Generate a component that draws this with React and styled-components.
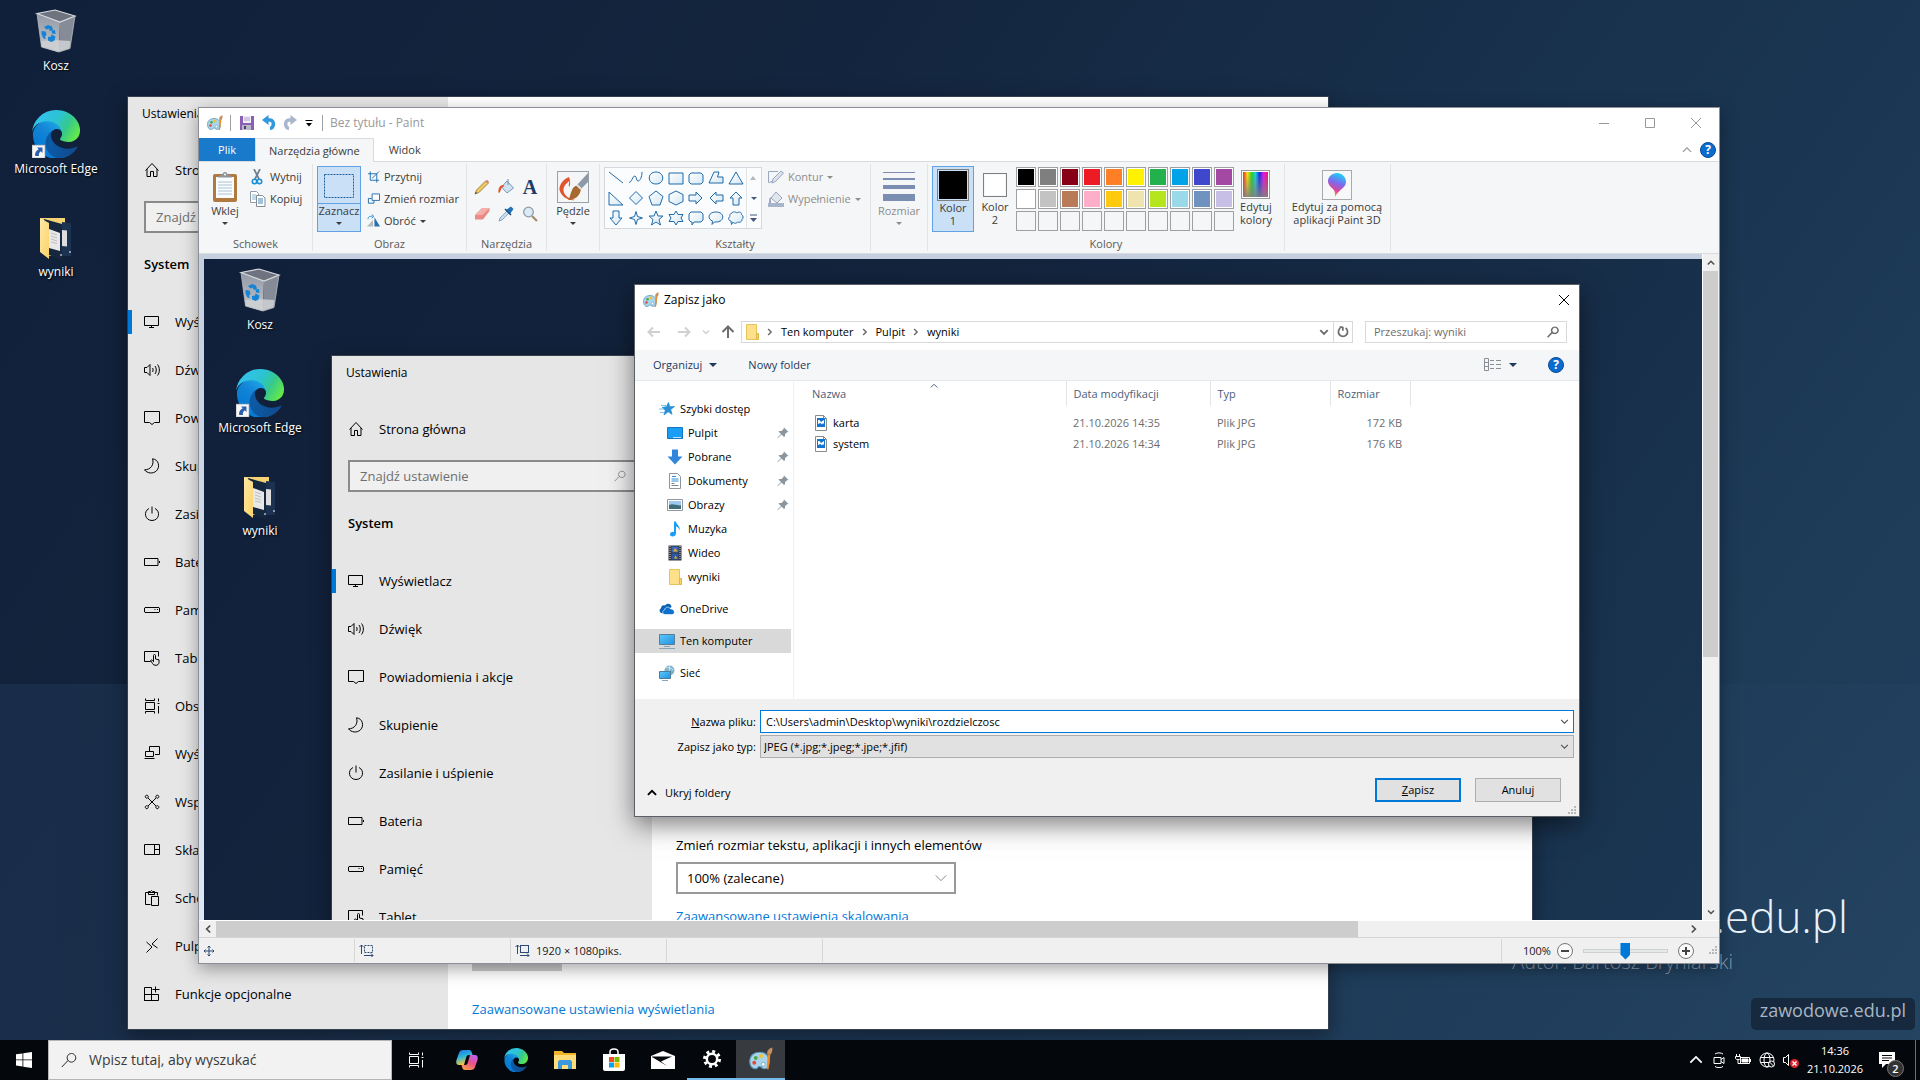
import React, { useId } from 'react'
import styled, { createGlobalStyle, css } from 'styled-components'

const GlobalStyle = createGlobalStyle`
  * {
    box-sizing: border-box;
  }
  body {
    margin: 0;
    overflow: hidden;
    font-family: 'Open Sans', 'Noto Sans', sans-serif;
    font-size: 11px;
    line-height: 16px;
    color: #000;
  }
  button, input, select {
    margin: 0;
    padding: 0;
    border: 0;
    border-radius: 0;
    background: none;
    font: inherit;
    color: inherit;
    outline: none;
  }
  svg {
    display: block;
    flex: none;
  }
  a {
    text-decoration: none;
  }
`

/* ---------- icons ---------- */

const Defs = styled.svg`
  position: absolute;
`

const Gradients = () => (
  <Defs width="0" height="0" aria-hidden="true">
    <linearGradient id="edgeDark" x1="0.2" y1="0.5" x2="1" y2="0.6">
      <stop offset="0" stopColor="#0c59a4" />
      <stop offset="1" stopColor="#114a8b" />
    </linearGradient>
    <linearGradient id="edgeBlue" x1="0.8" y1="0.2" x2="0.3" y2="1">
      <stop offset="0" stopColor="#1b9de2" />
      <stop offset="0.3" stopColor="#1384d6" />
      <stop offset="1" stopColor="#0078d4" />
    </linearGradient>
    <linearGradient id="edgeGreen" x1="0" y1="0.3" x2="1" y2="0.7">
      <stop offset="0" stopColor="#35c1f1" />
      <stop offset="0.45" stopColor="#2bc3d2" />
      <stop offset="0.7" stopColor="#36c98c" />
      <stop offset="1" stopColor="#66eb46" />
    </linearGradient>
    <linearGradient id="binSide" x1="0" y1="0" x2="0" y2="1">
      <stop offset="0" stopColor="#9299a4" />
      <stop offset="1" stopColor="#c3c6cb" />
    </linearGradient>
    <linearGradient id="folderFront" x1="0" y1="0" x2="1" y2="1">
      <stop offset="0" stopColor="#ffe9a6" />
      <stop offset="1" stopColor="#fbd267" />
    </linearGradient>
    <linearGradient id="shapeFill" x1="0" y1="0" x2="1" y2="1">
      <stop offset="0" stopColor="#ffffff" />
      <stop offset="1" stopColor="#d5e8f3" />
    </linearGradient>
    <linearGradient id="screen" x1="0" y1="0" x2="1" y2="1">
      <stop offset="0" stopColor="#5ec8fb" />
      <stop offset="1" stopColor="#1f92e0" />
    </linearGradient>
    <linearGradient id="rainbow">
      <stop offset="0" stopColor="#ff2020" />
      <stop offset="0.18" stopColor="#ffe600" />
      <stop offset="0.35" stopColor="#23d423" />
      <stop offset="0.5" stopColor="#10d5e8" />
      <stop offset="0.66" stopColor="#1a22f0" />
      <stop offset="0.83" stopColor="#ee10ee" />
      <stop offset="1" stopColor="#f01848" />
    </linearGradient>
    <linearGradient id="fadeGray" x1="0" y1="0" x2="0" y2="1">
      <stop offset="0" stopColor="#808080" stopOpacity="0" />
      <stop offset="1" stopColor="#808080" stopOpacity="0.9" />
    </linearGradient>
    <linearGradient id="pinDrop" x1="0.6" y1="0" x2="0.3" y2="1">
      <stop offset="0" stopColor="#19d3f5" />
      <stop offset="0.4" stopColor="#7a6cf0" />
      <stop offset="0.7" stopColor="#d8479b" />
      <stop offset="1" stopColor="#f7b32b" />
    </linearGradient>
    <linearGradient id="copilotA" x1="0" y1="0" x2="0.3" y2="1">
      <stop offset="0" stopColor="#1d6fe8" />
      <stop offset="0.5" stopColor="#2bb6d9" />
      <stop offset="1" stopColor="#f5c63a" />
    </linearGradient>
    <linearGradient id="copilotB" x1="0.8" y1="0" x2="0.3" y2="1">
      <stop offset="0" stopColor="#b665f2" />
      <stop offset="0.5" stopColor="#ee4f8c" />
      <stop offset="1" stopColor="#fa9a4b" />
    </linearGradient>
  </Defs>
)

const EdgeIcon = ({ size = 48, shortcut }) => (
  <svg width={size} height={size} viewBox="0 0 256 256">
    <path fill="url(#edgeDark)" d="M235.7 195.5a93.7 93.7 0 0 1-10.6 4.7 101.9 101.9 0 0 1-35.9 6.4c-47.3 0-88.5-32.5-88.5-74.3a31.5 31.5 0 0 1 16.4-27.3c-42.8 1.8-53.8 46.4-53.8 72.5 0 74 68.1 81.4 82.8 81.4 7.9 0 19.8-2.3 27-4.6l1.3-.4a128.3 128.3 0 0 0 66.6-52.8 4 4 0 0 0-5.3-5.6Z" />
    <path fill="url(#edgeBlue)" d="M110.3 246.3A79.2 79.2 0 0 1 87.6 225a80.7 80.7 0 0 1 29.5-120c3.2-1.5 8.5-4.1 15.6-4a32.4 32.4 0 0 1 25.7 13 31.9 31.9 0 0 1 6.3 18.7c0-.2 24.5-79.6-80-79.6-43.9 0-80 41.6-80 78.2a130.2 130.2 0 0 0 12.1 56 128 128 0 0 0 156.4 67 75.5 75.5 0 0 1-62.8-8Z" />
    <path fill="url(#edgeGreen)" d="M152.5 148.9c-.9 1-3.4 2.5-3.4 5.6 0 2.6 1.7 5.2 4.8 7.3 14.3 10 41.4 8.6 41.5 8.6a59.6 59.6 0 0 0 30.3-8.3 61.4 61.4 0 0 0 30.4-52.9c.3-22.4-8-37.3-11.3-43.9C223.5 23.9 177.7 0 128 0A128 128 0 0 0 0 126.2c.5-36.5 36.8-66 80-66 3.5 0 23.5.3 42 10 16.3 8.6 24.9 18.9 30.8 29.2 6.2 10.7 7.3 24.1 7.3 29.5 0 5.3-2.7 13.3-7.6 20Z" />
    {shortcut && (
      <g transform="translate(0 187) scale(5.33)">
        <rect width="13" height="13" fill="#f6f7f8" stroke="#9aa1a8" strokeWidth="0.6" />
        <path d="M5 2.5h5.5V8L8.800 6.300C7.200 7.400 6.600 8.800 7 11H3.200C2.600 8 4 5.600 6.700 4.200z" fill="#2d5fae" />
      </g>
    )}
  </svg>
)

const BinIcon = () => (
  <svg width="48" height="48" viewBox="0 0 48 48">
    <path d="M5 6.500 28 15 27 45 9.500 40z" fill="url(#binSide)" />
    <path d="M28 15 43 9 38 41.500 27 45z" fill="#858c97" />
    <path d="M9 34 22 33l16.500 1-1 7.500L26 45 9.500 40z" fill="#cfd1d3" opacity="0.85" />
    <path d="M5 6.500 23 3l20 6-15 6z" fill="#6d7480" stroke="#dadcde" strokeWidth="1.200" />
    <path d="M5 6.500 9.500 40 27 45 38 41.500 43 9" fill="none" stroke="#b7bcc2" strokeWidth="0.800" />
    <g fill="#1583d8">
      <path d="M12 20l4-2 4 1.500 1 3.500-3 1-1.500-2.500-2 1z" />
      <path d="M9.500 24l4 .5 1 3-1.500 2.500 1 2-2.500-.5-2-4z" />
      <path d="M16 30l3-.5.5-2 4 2-1 4-3 1.500-3.500-1.500z" />
      <path d="M19.500 23.500l3.500-.5.500 4-3.500-.500z" />
    </g>
  </svg>
)

const WynikiIcon = () => (
  <svg width="48" height="48" viewBox="0 0 48 48">
    <path d="M8 5h25v38H17z" fill="#f5d272" />
    <path d="M12 6l18 5v36l-13-5z" fill="#16283f" />
    <path d="M30 9l9 1v33l-9 0z" fill="#1b3350" />
    <path d="M17 16l11 4v18l-11-3z" fill="#e8e8e8" />
    <path d="M30 17l5 .5v16l-5-.500z" fill="#dedede" />
    <path d="M19 20l6 2M19 23l6 2M19 26l6 2M19 29l6 1.500" stroke="#b5b5b5" strokeWidth="0.800" />
    <path d="M38 38v2M29 41v2" stroke="#fff" />
    <path d="M8 5l9 5v36l-9-7z" fill="url(#folderFront)" />
  </svg>
)

const PaletteIcon = ({ size = 16 }) => (
  <svg width={size} height={size} viewBox="0 0 16 16">
    <path d="M7 3.500C3 3.500.5 6 .5 9.500S2.500 14.500 4.500 14.500c1.500 0 1-1.500 2.500-1.500s1.500 1.500 3.500 1.500C12.500 14.500 13.500 12 13.500 9.500 13.500 6 11 3.500 7 3.500z" fill="#a9d4ea" stroke="#5c98bd" strokeWidth="0.800" />
    <circle cx="3.500" cy="10.500" r="1.300" fill="#e24a3b" />
    <circle cx="4.500" cy="7.300" r="1.300" fill="#4aa84a" />
    <circle cx="8" cy="6" r="1.400" fill="#f2c22e" />
    <circle cx="9.500" cy="11.500" r="1.300" fill="#fff" stroke="#5c98bd" strokeWidth="0.500" />
    <path d="M12.500 5h1.800L13 15l-1.200-.3z" fill="#f08a24" />
    <path d="M12.300 5C11.500 3 13 1 15.500.3c.3 2-.2 3.700-1.200 4.700z" fill="#c98f5e" />
  </svg>
)

const iconPaths = {
  home: 'M1.500 8.500 8 1.500l6.500 7M3 7v7.500h3.500V9.500h3v5H13V7',
  display: 'M.5 2.500h14v9H.5zM5 13.500h5M7.500 11.500v2',
  sound: 'M.5 5.500h2.500l3-3v11l-3-3H.5zM8.500 6c.8 1 .8 3 0 4M11 4c1.700 2 1.700 6 0 8M13.500 2.500c2.500 3 2.500 8 0 11',
  bell: 'M.5 1.500h15v11h-5l-2.500 2-2.500-2h-5z',
  moon: 'M8.500.8c6 .5 8 8 4 12-3.500 3.500-9.500 2.500-12-1C6.500 12 10.500 6.500 8.500.8z',
  power: 'M8 .5v7M5 2.500c-6 3-4 12 3 12s9-9 3-12',
  battery: 'M.5 4.500h13.500v7H.5zM15.500 7v2',
  storage: 'M1 5.500h14l.5.500v4l-.5.500H1l-.5-.5v-4zM10.500 7.500h1M13 7.500h1',
  tablet: 'M6.500 11.500h-6v-10h14v5M9.500 12V5.500c0-1.300 2-1.300 2 0V9l3.500.8v2.700c0 3.500-5.500 3.500-6.500 1L6.500 10.500c.5-1 2-.5 3 1',
  multi: 'M1.500.5v2h9v-2M1.500 4.500h9v7h-9zM1.500 15.500v-2h9v2M14.500.5v3M14.500 8v7.500M13.500 5.500h2',
  project: 'M5.500 5V.5h10v8h-4.500M1.500 5.500h8v5h-8zM.5 12.500h10',
  share: 'M4 4l8 8M12 4l-8 8M2.700 1.200a1.500 1.500 0 1 0 .1 0M13.300 1.200a1.500 1.500 0 1 0 .1 0M2.700 11.700a1.500 1.500 0 1 0 .1 0M13.300 11.700a1.500 1.500 0 1 0 .1 0',
  parts: 'M.5 2.500h15v10H.5zM10.500 2.500v10M10.500 7.500h5',
  clipboard: 'M6.500 14.500h-5v-12h12v3M4.500 3V1.500h2l1-1 1 1h2v3h-6zM7.500 6.500h7v9h-7z',
  remote: 'M13.500.5 8 6l5.500 4M2.500 4 8 9l-5.500 5.500',
  optional: 'M.5 1.500h7v13h-7zM.5 8.500h14v6h-14zM11.500.5v6M8.500 3.500h7',
  search: 'M10.500 1.500a4.300 4.300 0 1 1-.1 0M7 8.500.8 15',
  chevronUp: 'M1.500 11 8 4.500l6.500 6.500',
  chevronDown: 'M2 5l6 6 6-6',
  chevronRight: 'M5.500 4l4 4-4 4',
  chevronLeft: 'M10.500 4l-4 4 4 4',
  close: 'M3 3l10 10M13 3 3 13',
  maximize: 'M3.500 3.500h9v9h-9z',
  minimize: 'M3 8.500h10',
  back: 'M14 8H2.500M7 3.500 2.500 8 7 12.500',
  forward: 'M2 8h11.500M9 3.500l4.500 4.500L9 12.500',
  up: 'M8 14V2.500M2.500 8 8 2.500 13.500 8',
  refresh: 'M5 3.500a5.200 5.200 0 1 0 6 0M7.500 2.500h-3.500M7.800 2v4.500'
}

const LineIcon = ({ name, size = 16, weight = 1 }) => (
  <svg width={size} height={size} viewBox="0 0 16 16" fill="none" stroke="currentColor" strokeWidth={weight}>
    <path d={iconPaths[name]} />
  </svg>
)

const Caret = styled.span`
  width: 0;
  height: 0;
  flex: none;
  border: solid transparent;
  border-width: ${({ $big }) => ($big ? '4px 4px 0' : '3px 3px 0')};
  border-top-color: currentColor;
`

/* ---------- desktop ---------- */

const Wallpaper = styled.div`
  position: relative;
  overflow: hidden;
  width: ${({ $picture }) => ($picture ? '1920px' : '100%')};
  height: ${({ $picture }) => ($picture ? '1080px' : '100vh')};
  background:
    linear-gradient(90deg, rgba(80, 130, 180, 0.11), rgba(80, 130, 180, 0.03)) 0 684px no-repeat,
    linear-gradient(125deg, #11203a 0%, #13243d 30%, #19334f 65%, #22425f 100%);
`

const IconColumn = styled.div`
  display: flex;
  flex-direction: column;
  width: 112px;
`

const DesktopIcon = styled.button`
  display: flex;
  flex-direction: column;
  align-items: center;
  gap: 3px;
  height: 103px;
  padding-top: 7px;
  color: #fff;
  font-size: 12px;
  text-shadow: 1px 1px 2px #000;
  white-space: nowrap;
`

const Shortcuts = () => (
  <IconColumn>
    <DesktopIcon><BinIcon />Kosz</DesktopIcon>
    <DesktopIcon><EdgeIcon shortcut />Microsoft Edge</DesktopIcon>
    <DesktopIcon><WynikiIcon />wyniki</DesktopIcon>
  </IconColumn>
)

const Branding = styled.div`
  position: absolute;
  right: 72px;
  bottom: 104px;
  display: flex;
  flex-direction: column;
  align-items: flex-end;
  font-weight: 300;
`

const BrandTitle = styled.div`
  font-size: 44px;
  line-height: 64px;
  color: #eaf2fa;
`

const BrandAuthor = styled.div`
  margin-right: 115px;
  font-size: 20px;
  line-height: 28px;
  color: #8799ac;
`

const BrandBadge = styled.div`
  position: absolute;
  right: 5px;
  bottom: 50px;
  height: 32px;
  padding: 0 9px;
  border-radius: 5px;
  background: #16293e;
  color: #a9b5c1;
  font-size: 18px;
  line-height: 24px;
`

/* ---------- settings window ---------- */

const SettingsFrame = styled.section`
  position: absolute;
  left: 127px;
  top: 96px;
  display: flex;
  width: 1202px;
  height: 934px;
  border: 1px solid #34404f;
  background: #fff;
  box-shadow: 0 6px 20px rgba(0, 0, 0, 0.4);
  font-size: 13px;
`

const Sidebar = styled.nav`
  display: flex;
  flex-direction: column;
  flex: 0 0 320px;
  background: #e6e6e6;
`

const SidebarTitle = styled.div`
  padding: 9px 14px 24px;
  font-size: 12px;
`

const SidebarLink = styled.a`
  display: flex;
  align-items: center;
  gap: 15px;
  height: 48px;
  padding-left: ${({ $active }) => ($active ? '12px' : '16px')};
  border-left: ${({ $active }) => ($active ? '4px solid #0078d7' : '0')};
  color: #000;
  white-space: nowrap;
  ${({ $active }) =>
    $active &&
    css`
      height: 24px;
      margin: 12px 0;
    `}
`

const SidebarSearch = styled.label`
  display: flex;
  align-items: center;
  height: 32px;
  margin: 7px 16px 0;
  padding: 0 8px 0 10px;
  border: 2px solid #8a8a8a;
  background: #f0f0f0;
  color: #767676;
  input {
    flex: 1;
    min-width: 0;
  }
  input::placeholder {
    color: #6e6e6e;
    opacity: 1;
  }
`

const SidebarHeading = styled.h2`
  margin: 0;
  padding: 21px 16px 24px;
  font-size: 13px;
  line-height: 20px;
  font-weight: 600;
`

const SettingsContent = styled.div`
  flex: 1;
  display: flex;
  flex-direction: column;
  align-items: flex-start;
  padding: 478px 24px 0;
  line-height: 22px;
  a {
    margin-top: 11px;
    color: #0078d7;
  }
`

const ScaleBox = styled.div`
  display: grid;
  align-items: center;
  width: 280px;
  margin-top: 6px;
  color: #777;
  select, svg {
    grid-area: 1 / 1;
  }
  select {
    appearance: none;
    width: 100%;
    height: 32px;
    padding-left: 9px;
    border: 2px solid #999;
    color: #000;
  }
  svg {
    justify-self: end;
    margin-right: 8px;
    pointer-events: none;
  }
`

const DetectButton = styled.button`
  width: 90px;
  height: 32px;
  margin: 271px 0 16px;
  background: #ccc;
`

const settingsPages = [
  ['display', 'Wyświetlacz'],
  ['sound', 'Dźwięk'],
  ['bell', 'Powiadomienia i akcje'],
  ['moon', 'Skupienie'],
  ['power', 'Zasilanie i uśpienie'],
  ['battery', 'Bateria'],
  ['storage', 'Pamięć'],
  ['tablet', 'Tablet'],
  ['multi', 'Obsługa wielu zadań'],
  ['project', 'Wyświetlanie na tym komputerze'],
  ['share', 'Współużytkowane środowisko'],
  ['parts', 'Składniki systemu'],
  ['clipboard', 'Schowek'],
  ['remote', 'Pulpit zdalny'],
  ['optional', 'Funkcje opcjonalne']
]

const Settings = () => {
  const id = useId()
  return (
    <SettingsFrame>
      <Sidebar>
        <SidebarTitle>Ustawienia</SidebarTitle>
        <SidebarLink href="#home"><LineIcon name="home" />Strona główna</SidebarLink>
        <SidebarSearch>
          <input type="search" placeholder="Znajdź ustawienie" aria-label="Znajdź ustawienie" />
          <LineIcon name="search" size={12} />
        </SidebarSearch>
        <SidebarHeading>System</SidebarHeading>
        {settingsPages.map(([icon, name], i) => (
          <SidebarLink key={icon} href={`#${icon}`} $active={i === 0}>
            <LineIcon name={icon} />
            {name}
          </SidebarLink>
        ))}
      </Sidebar>
      <SettingsContent>
        <label htmlFor={id}>Zmień rozmiar tekstu, aplikacji i innych elementów</label>
        <ScaleBox>
          <select id={id}>
            <option>100% (zalecane)</option>
          </select>
          <LineIcon name="chevronDown" size={14} />
        </ScaleBox>
        <a href="#scale">Zaawansowane ustawienia skalowania</a>
        <DetectButton>Wykryj</DetectButton>
        <a href="#advanced">Zaawansowane ustawienia wyświetlania</a>
      </SettingsContent>
    </SettingsFrame>
  )
}

/* ---------- paint window ---------- */

const PaintFrame = styled.section`
  position: absolute;
  inset: 107px 200px 116px 198px;
  display: flex;
  flex-direction: column;
  border: 1px solid #8b9096;
  background: #fff;
  box-shadow: 0 5px 16px rgba(0, 0, 0, 0.35);
`

const TitleBar = styled.header`
  display: flex;
  align-items: center;
  height: 30px;
  padding-left: 8px;
  color: #999;
  font-size: 12px;
`

const QuickTools = styled.div`
  display: flex;
  align-items: center;
  gap: 5px;
  margin: 0 7px;
  padding: 0 7px;
  border: solid #a0a0a0;
  border-width: 0 1px;
  line-height: 12px;
  color: #000;
`

const WindowButtons = styled.div`
  display: flex;
  margin-left: auto;
  button {
    display: grid;
    place-items: center;
    width: 46px;
    height: 30px;
  }
`

const TabRow = styled.div`
  display: flex;
  align-items: center;
  height: 24px;
  border-bottom: 1px solid #dadbdc;
  color: #333;
`

const Tab = styled.button`
  align-self: flex-start;
  height: ${({ $active }) => ($active ? '24px' : '23px')};
  padding: 0 ${({ $active }) => ($active ? '13px' : '15px')};
  border: ${({ $active }) => ($active ? '1px solid #dadbdc' : '0')};
  border-bottom: 0;
  background: ${({ $file, $active }) => ($file ? '#1979ca' : $active ? '#f5f6f7' : 'none')};
  color: ${({ $file }) => ($file ? '#fff' : '#3c3c3c')};
  ${({ $file }) => $file && 'width: 56px;'}
`

const TabTools = styled.div`
  display: flex;
  align-items: center;
  gap: 8px;
  margin-left: auto;
  padding-right: 3px;
  color: #999;
`

const HelpButton = styled.button`
  width: 16px;
  height: 16px;
  border: 1px solid #0a4a94;
  border-radius: 50%;
  background: #0a6cce;
  color: #fff;
  font-size: 12px;
  line-height: 14px;
  font-weight: 700;
`

const Ribbon = styled.div`
  display: flex;
  height: 92px;
  padding: 2px 0;
  border-bottom: 1px solid #dadbdc;
  background: #f5f6f7;
  color: #3c3c3c;
`

const Group = styled.div`
  display: flex;
  flex-direction: column;
  justify-content: space-between;
  width: ${({ $w }) => $w}px;
  padding: 2px 4px 0;
  border-right: 1px solid #e2e3e4;
`

const GroupBody = styled.div`
  display: flex;
  gap: ${({ $gap = 0 }) => $gap}px;
`

const GroupName = styled.div`
  text-align: center;
  line-height: 14px;
  color: #5a5a5a;
`

const BigButton = styled.button`
  display: flex;
  flex-direction: column;
  align-items: center;
  width: ${({ $w = 44 }) => $w}px;
  height: 66px;
  padding-top: 2px;
  border: 1px solid ${({ $on }) => ($on ? '#62a2e4' : 'transparent')};
  background: ${({ $on }) => ($on ? '#c9e0f7' : 'none')};
  color: ${({ $muted }) => ($muted ? '#8d8d8d' : '#3c3c3c')};
  line-height: 13px;
  white-space: nowrap;
`

const BigIcon = styled.span`
  display: grid;
  place-items: center;
  height: 35px;
  width: 100%;
  ${({ $ruled }) => $ruled && 'border-bottom: 1px solid #62a2e4;'}
`

const ButtonText = styled.span`
  margin: 0 0 5px;
`

const SmallColumn = styled.div`
  display: flex;
  flex-direction: column;
`

const SmallButton = styled.button`
  display: flex;
  align-items: center;
  gap: 4px;
  height: 22px;
  color: ${({ $muted }) => ($muted ? '#8d8d8d' : '#3c3c3c')};
  white-space: nowrap;
`

const ToolGrid = styled.div`
  display: grid;
  grid-template-columns: repeat(3, 24px);
  grid-auto-rows: 27px;
  padding-top: 7px;
  button {
    display: grid;
    place-items: center;
    width: 22px;
  }
`

const ToolLetter = styled.span`
  font-family: 'Liberation Serif', serif;
  font-size: 20px;
  line-height: 20px;
  font-weight: 700;
  color: #1f3b66;
`

const ShapeGallery = styled.div`
  display: grid;
  grid-template-columns: repeat(7, 20px) 14px;
  grid-template-rows: repeat(3, 20px);
  margin: 1px 0 0;
  padding: 0 1px;
  border: 1px solid #d5d8dc;
  background: #fbfcfd;
  button {
    display: grid;
    place-items: center;
  }
`

const GalleryScroll = styled.div`
  grid-column: 8;
  grid-row: 1 / 4;
  display: grid;
  grid-template-rows: repeat(3, 20px);
  border-left: 1px solid #e2e3e4;
  color: #46567a;
`

const SizeLines = styled.span`
  display: flex;
  flex-direction: column;
  gap: 5px;
  width: 32px;
  span {
    background: #7b8db0;
  }
`

const SizeLine = styled.span`
  height: ${({ $h }) => $h}px;
`

const Swatch = styled.span`
  width: ${({ $size }) => $size}px;
  height: ${({ $size }) => $size}px;
  padding: 1px;
  border: 1px solid #808080;
  background: ${({ $color }) => $color} content-box;
`

const Palette = styled.div`
  display: grid;
  grid-template-columns: repeat(10, 20px);
  gap: 2px;
  align-content: start;
  margin: 1px 1px 0 0;
`

const PaletteCell = styled.button`
  height: 20px;
  padding: 1px;
  border: 1px solid #a0a0a0;
  background: ${({ $color }) => ($color ? `${$color} content-box` : 'none')};
  ${({ $color }) => $color && 'box-shadow: inset 0 0 0 1px #fff;'}
`

const Workspace = styled.div`
  flex: 1;
  min-height: 0;
  display: grid;
  grid-template-columns: 1fr 17px;
  grid-template-rows: 1fr 17px;
`

const CanvasArea = styled.div`
  overflow: hidden;
  padding: 5px 0 0 5px;
  background: linear-gradient(#c6cfe0, #dce6f4);
`

const CanvasView = styled.div`
  height: 100%;
  overflow: hidden;
`

const ScrollBar = styled.div`
  display: flex;
  flex-direction: ${({ $vertical }) => ($vertical ? 'column' : 'row')};
  border: solid #fff;
  border-width: ${({ $vertical }) => ($vertical ? '0 0 0 1px' : '1px 0 0')};
  background: #f0f0f0;
  color: #505050;
  button {
    display: grid;
    place-items: center;
    flex: 0 0 17px;
  }
`

const ScrollThumb = styled.div`
  flex: 0 0 ${({ $part }) => $part};
  ${({ $vertical }) => $vertical && 'margin-right: 1px;'}
  background: #cdcdcd;
`

const Spacer = styled.div`
  flex: 1;
`

const StatusBar = styled.footer`
  display: flex;
  align-items: center;
  height: 26px;
  border-top: 1px solid #d5d5d5;
  background: #f0f0f0;
  color: #1a1a1a;
`

const StatusCell = styled.div`
  display: flex;
  align-items: center;
  gap: 6px;
  width: 156px;
  height: 23px;
  padding-left: 4px;
  border-right: 1px solid #d7d7d7;
`

const ZoomTools = styled.div`
  display: flex;
  align-items: center;
  width: 218px;
  margin-left: auto;
  height: 23px;
  padding: 0 1px 0 21px;
  border-left: 1px solid #d7d7d7;
`

const RoundButton = styled.button`
  display: grid;
  place-items: center;
  width: 16px;
  height: 16px;
  margin: 0 6px;
  border: 1px solid #777;
  border-radius: 50%;
  background: #fafafa;
`

const ZoomSlider = styled.input`
  appearance: none;
  width: 85px;
  height: 18px;
  margin: 0 4px;
  &::-webkit-slider-runnable-track {
    height: 4px;
    border: 1px solid #d0d0d0;
    background: #e7eaea;
  }
  &::-webkit-slider-thumb {
    appearance: none;
    width: 10px;
    height: 17px;
    margin-top: -7px;
    background: #0078d7;
    clip-path: polygon(0 0, 100% 0, 100% 70%, 50% 100%, 0 70%);
  }
`

const shapes = [
  'M1 2l14 11', 'M1 12c2 2 4-7 6-6s1 5 3 5 4-4 4-9', 'M8 2c9 0 9 12 0 12S-1 2 8 2z', 'M1 3h14v11H1z',
  'M3 3h10l2 2v7l-2 2H3l-2-2V5z', 'M1 13 6 2h5L9.500 7H15v6z', 'M8 2l7 12H1z',
  'M1 2v13h14z', 'M8 1.500 14.500 8 8 14.500 1.500 8z', 'M8 1l7 5.500L12 15H4L1 6.500z', 'M8 1l7 3.500v7L8 15l-7-3.500v-7z',
  'M1 5h7V2l6 6-6 6v-3H1z', 'M15 5H8V2L2 8l6 6v-3h7z', 'M5 15V8H2l6-6 6 6h-3v7z',
  'M5 1v7H2l6 7 6-7h-3V1z', 'M8 1.500 9.500 6.500l5 1.500-5 1.500L8 14.500 6.500 9.500l-5-1.500 5-1.500z',
  'M8 1l2 5h5l-4 3.500L12.500 15 8 12l-4.500 3L5 9.500 1 6h5z', 'M8 1l2 3.500h5L13 8l2 3.500h-5L8 15l-2-3.500H1L3 8 1 4.500h5z',
  'M3 2h10l2 2v6l-2 2H6l-2 3v-3H3l-2-2V4z', 'M8 2c9 0 9 10 0 10H6.500L4 14.500 4.500 11C-1 9 0 2 8 2z',
  'M4 3c1-2 4-1 5 0 2-2 5-.5 4.500 1.500 2 1 2 4 .5 5 0 3-3 3-4.500 2.500C8 14 6 13.500 5 12l-1.500 2.500L3 11C0 10.500 0 7.500 2 6.500 1.500 5 2 3.500 4 3z'
]

const paletteColors = [
  '#000000', '#7f7f7f', '#880015', '#ed1c24', '#ff7f27', '#fff200', '#22b14c', '#00a2e8', '#3f48cc', '#a349a4',
  '#ffffff', '#c3c3c3', '#b97a57', '#ffaec9', '#ffc90e', '#efe4b0', '#b5e61d', '#99d9ea', '#7092be', '#c8bfe7',
  ...Array(10).fill(null)
]

const PaintTitle = () => (
  <TitleBar>
    <PaletteIcon />
    <QuickTools>
      <button aria-label="Zapisz">
        <svg width="18" height="16" viewBox="1 0 18 16">
          <path d="M3 1h14v14H3z" fill="#8b5fb5" />
          <path d="M6 1h8v7H6z" fill="#f2eef6" />
          <path d="M5 10h9v5H5z" fill="#b9b9c4" />
          <path d="M7 11h2v3H7z" fill="#4f3a6b" />
          <path d="M7 3h6M7 5h6" stroke="#b79fd0" />
        </svg>
      </button>
      <button aria-label="Cofnij">
        <svg width="16" height="16" viewBox="0 0 16 16">
          <path d="M5 5h4c4.500 0 4.500 8 0 8.500" fill="none" stroke="#3098dc" strokeWidth="3.500" />
          <path d="M7.500 0v10L1 5z" fill="#3098dc" />
        </svg>
      </button>
      <button aria-label="Ponów">
        <svg width="16" height="16" viewBox="0 0 16 16">
          <path d="M10 5H7c-4.500 0-4.500 8 0 8.500" fill="none" stroke="#a9b6cc" strokeWidth="3.500" />
          <path d="M8.500 0v10L15 5z" fill="#a9b6cc" />
        </svg>
      </button>
      <button aria-label="Dostosuj pasek">
        <svg width="12" height="12" viewBox="2 0 12 12">
          <path d="M4.500 3.500h7" stroke="#000" />
          <path d="M5 6h6L8 9.500z" />
        </svg>
      </button>
    </QuickTools>
    Bez tytułu - Paint
    <WindowButtons>
      <button aria-label="Minimalizuj"><LineIcon name="minimize" /></button>
      <button aria-label="Maksymalizuj"><LineIcon name="maximize" /></button>
      <button aria-label="Zamknij"><LineIcon name="close" /></button>
    </WindowButtons>
  </TitleBar>
)

const PaintRibbon = () => (
  <Ribbon>
    <Group $w={114}>
      <GroupBody $gap={2}>
        <BigButton>
          <BigIcon>
            <svg width="26" height="32" viewBox="0 0 26 32">
              <rect x="1" y="3" width="24" height="28" rx="2" fill="#b0793f" />
              <rect x="4" y="6" width="18" height="21" fill="#fbfcfd" />
              <path d="M6 11h14M6 14h14M6 17h14M6 20h14M6 23h14" stroke="#a8c4d6" />
              <path d="M6 6.500c0-2 3-2 4-3s1-2.500 3-2.500 2 1.500 3 2.500 4 1 4 3z" fill="#8f959b" />
              <circle cx="13" cy="3.500" r="1" fill="#fff" />
            </svg>
          </BigIcon>
          <ButtonText>Wklej</ButtonText>
          <Caret />
        </BigButton>
        <SmallColumn>
          <SmallButton>
            <svg width="17" height="16" viewBox="0 0 17 16">
              <path d="M5 0l5 10M11 0 6 10" stroke="#6f7f8f" strokeWidth="1.700" />
              <circle cx="5.500" cy="12.500" r="2.200" fill="none" stroke="#1c8fd6" strokeWidth="1.600" />
              <circle cx="10.500" cy="12.500" r="2.200" fill="none" stroke="#1c8fd6" strokeWidth="1.600" />
            </svg>
            Wytnij
          </SmallButton>
          <SmallButton>
            <svg width="17" height="16" viewBox="0 0 17 16">
              <path d="M1.500.5h6l2 2v9h-8z" fill="#fff" stroke="#949ba3" />
              <path d="M3 4h4M3 6h4M3 8h4" stroke="#8fb4d0" />
              <path d="M7.500 4.500h6l2.500 2.500v8.500H7.500z" fill="#fff" stroke="#838b94" />
              <path d="M9 8h5M9 10h5M9 12h5" stroke="#3f84bd" />
            </svg>
            Kopiuj
          </SmallButton>
        </SmallColumn>
      </GroupBody>
      <GroupName>Schowek</GroupName>
    </Group>
    <Group $w={154}>
      <GroupBody $gap={6}>
        <BigButton $on>
          <BigIcon $ruled>
            <svg width="30" height="25" viewBox="0 0 30 25">
              <rect x="0.500" y="0.500" width="29" height="23" fill="none" stroke="#1c5f9e" strokeDasharray="2 1" />
            </svg>
          </BigIcon>
          <ButtonText>Zaznacz</ButtonText>
          <Caret />
        </BigButton>
        <SmallColumn>
          <SmallButton>
            <svg width="13" height="14" viewBox="0 0 14 14">
              <path d="M1 3.500h9.500V13M3.500 1v9.500H13M5.500 8.500 13 1" fill="none" stroke="#1e6cae" />
            </svg>
            Przytnij
          </SmallButton>
          <SmallButton>
            <svg width="13" height="14" viewBox="0 0 14 14">
              <path d="M5.500 1.500h8v7h-8z" fill="#fff" stroke="#1e6cae" />
              <path d="M5 6.500H1.500v5h6V9" fill="none" stroke="#1e6cae" />
            </svg>
            Zmień rozmiar
          </SmallButton>
          <SmallButton>
            <svg width="13" height="14" viewBox="0 0 14 14">
              <path d="M8 3v10h6z" fill="#2a6fae" />
              <path d="M6.500 6v7H0z" fill="#b5b9bd" />
              <path d="M1 5c0-3 3-3.500 5-3M5 0l2.500 2L5 4" fill="none" stroke="#2a8fd8" />
            </svg>
            Obróć
            <Caret />
          </SmallButton>
        </SmallColumn>
      </GroupBody>
      <GroupName>Obraz</GroupName>
    </Group>
    <Group $w={80}>
      <ToolGrid>
        <button aria-label="Ołówek">
          <svg width="16" height="16" viewBox="0 0 16 16">
            <path d="M1 15l1.500-4L11.500 2l2.500 2.500L5 13.500z" fill="#f0c75a" stroke="#7d6a3a" strokeWidth="0.700" />
            <path d="M11.500 2 13 .8l2.200 2.200L14 4.500z" fill="#d98078" />
            <path d="M1 15l.8-2L3 14z" fill="#333" />
          </svg>
        </button>
        <button aria-label="Wypełnij kolorem">
          <svg width="16" height="16" viewBox="0 0 16 16">
            <path d="M9 2l6.500 7-6.500 5-5.500-6z" fill="#cfe3f1" stroke="#6b8fb0" strokeWidth="0.900" />
            <path d="M10 0v6" stroke="#7891a8" />
            <path d="M5 6C2 6 0 9 .5 14c2 0 2-3 3-5l3-2z" fill="#e2552c" />
          </svg>
        </button>
        <button aria-label="Tekst">
          <ToolLetter>A</ToolLetter>
        </button>
        <button aria-label="Gumka">
          <svg width="16" height="16" viewBox="0 0 16 16">
            <path d="M1 9l7-7h7.500v3L9 13.500H1z" fill="#e88a86" />
            <path d="M1 9l7-7h7.500L8.500 9z" fill="#f6b0ab" />
          </svg>
        </button>
        <button aria-label="Selektor kolorów">
          <svg width="16" height="16" viewBox="0 0 16 16">
            <path d="M1 15l1-3 7-7 2 2-7 7z" fill="#c8e0f2" stroke="#6a87a0" strokeWidth="0.700" />
            <path d="M8 4l4 4 3.500-5L13 .5z" fill="#2272b8" />
            <path d="M7 3l6 6" stroke="#1c4f86" strokeWidth="1.600" />
          </svg>
        </button>
        <button aria-label="Lupa">
          <svg width="16" height="16" viewBox="0 0 16 16">
            <path d="M10 10l5 5" stroke="#a88b6c" strokeWidth="2.200" />
            <circle cx="6.500" cy="6" r="4.800" fill="#d9ebf7" stroke="#8f9ba6" strokeWidth="1.300" />
          </svg>
        </button>
      </ToolGrid>
      <GroupName>Narzędzia</GroupName>
    </Group>
    <Group $w={53}>
      <BigButton>
        <BigIcon>
          <svg width="32" height="32" viewBox="0 0 32 32">
            <rect x="0.500" y="0.500" width="31" height="31" fill="#f3f5f7" stroke="#9aa0a6" />
            <path d="M12 6C6 8 2 14 2.500 19c2 7 9 11 16 10-7-1-12-5-12-10 0-4 3-7 6-9-1 4-1 5 0 6 1-3 1-7-.5-10z" fill="#e2552c" />
            <path d="M31 2v9l-7 7-4-4z" fill="#8d99a6" />
            <path d="M24 18c-1 7-6 11-13 11 2-2 2-6 4-10 1-3 4-5 6-4z" fill="#a8692f" />
            <path d="M20 14l4 4" stroke="#dfe3e8" strokeWidth="2" />
          </svg>
        </BigIcon>
        <ButtonText>Pędzle</ButtonText>
        <Caret />
      </BigButton>
    </Group>
    <Group $w={271}>
      <GroupBody $gap={6}>
        <ShapeGallery>
          {shapes.map((d, i) => (
            <button key={d} aria-label={`Kształt ${i + 1}`}>
              <svg width="16" height="16" viewBox="0 0 16 16">
                <path d={d} fill={i < 2 ? 'none' : 'url(#shapeFill)'} stroke="#1f6bab" />
              </svg>
            </button>
          ))}
          <GalleryScroll>
            <button aria-label="W górę">
              <svg width="7" height="4"><path d="M0 4 3 0l3 4z" fill="#b5b9bf" /></svg>
            </button>
            <button aria-label="W dół"><Caret /></button>
            <button aria-label="Więcej">
              <svg width="7" height="8"><path d="M0 1h7" stroke="#46567a" /><path d="M0 4h7L3.500 8z" fill="#46567a" /></svg>
            </button>
          </GalleryScroll>
        </ShapeGallery>
        <SmallColumn>
          <SmallButton $muted>
            <svg width="16" height="14" viewBox="0 0 16 14">
              <path d="M10 1.500H.5v11l4-1" fill="none" stroke="#98a6bf" />
              <path d="M4 13l1-4 8-8 2.500 2-8 8.500z" fill="#dde3ec" stroke="#98a6bf" />
            </svg>
            Kontur
            <Caret />
          </SmallButton>
          <SmallButton $muted>
            <svg width="16" height="16" viewBox="0 0 16 16">
              <path d="M8 1l6 6-5 5-6-5z" fill="#e2e7ef" stroke="#98a6bf" />
              <path d="M3 6c-2 1-2 3-2 6h2z" fill="#98a6bf" />
              <path d="M0 12h16v4H0z" fill="#a8b4c9" />
            </svg>
            Wypełnienie
            <Caret />
          </SmallButton>
        </SmallColumn>
      </GroupBody>
      <GroupName>Kształty</GroupName>
    </Group>
    <Group $w={57}>
      <BigButton $muted $w={48}>
        <BigIcon>
          <SizeLines>
            {[1, 2, 4, 7].map(h => <SizeLine key={h} $h={h} />)}
          </SizeLines>
        </BigIcon>
        <ButtonText>Rozmiar</ButtonText>
        <Caret />
      </BigButton>
    </Group>
    <Group $w={357}>
      <GroupBody>
        <BigButton $on $w={42}>
          <BigIcon><Swatch $size={32} $color="#000" /></BigIcon>
          <ButtonText>Kolor<br />1</ButtonText>
        </BigButton>
        <BigButton $w={42}>
          <BigIcon><Swatch $size={24} $color="#fff" /></BigIcon>
          <ButtonText>Kolor<br />2</ButtonText>
        </BigButton>
        <Palette>
          {paletteColors.map((color, i) => (
            <PaletteCell key={i} $color={color} aria-label={`Kolor ${i + 1}`} />
          ))}
        </Palette>
        <BigButton $w={42}>
          <BigIcon>
            <svg width="30" height="30" viewBox="0 0 30 30">
              <rect x="0.500" y="0.500" width="28" height="28" fill="#fff" stroke="#999" />
              <rect x="2" y="2" width="25" height="25" fill="url(#rainbow)" />
              <rect x="2" y="2" width="25" height="25" fill="url(#fadeGray)" />
            </svg>
          </BigIcon>
          <ButtonText>Edytuj<br />kolory</ButtonText>
        </BigButton>
      </GroupBody>
      <GroupName>Kolory</GroupName>
    </Group>
    <Group $w={106}>
      <BigButton $w={96}>
        <BigIcon>
          <svg width="30" height="30" viewBox="0 0 30 30">
            <rect x="0.500" y="0.500" width="29" height="29" fill="#f8f8f8" stroke="#aaa" />
            <path d="M15 3c5 0 9 4 9 9 0 6-7 7-11 15 0-4 0-6-2-8s-5-4-5-8 4-8 9-8z" fill="url(#pinDrop)" />
          </svg>
        </BigIcon>
        <ButtonText>Edytuj za pomocą<br />aplikacji Paint 3D</ButtonText>
      </BigButton>
    </Group>
  </Ribbon>
)

const Grip = () => (
  <svg width="10" height="10" fill="#b8b8b8">
    <path d="M7 0h2v2H7zM7 3h2v2H7zM7 6h2v2H7zM4 3h2v2H4zM4 6h2v2H4zM1 6h2v2H1z" />
  </svg>
)

const SizeGlyph = ({ dashed }) => (
  <svg width="15" height="13" viewBox="0 0 15 13" fill="none" stroke="#2b4a75">
    <path d="M2.500 10V1M.5 3l2-2 2 2M5 11.500h9M12 9.500l2 2-2 2" />
    <rect x="5.500" y="1.500" width="8" height="7" strokeDasharray={dashed ? '2 1' : 'none'} />
  </svg>
)

const PaintStatus = () => (
  <StatusBar>
    <StatusCell>
      <svg width="12" height="12" viewBox="0 0 12 12" fill="none" stroke="#2b4a75">
        <path d="M6 1v10M1 6h10M4.500 2.500 6 1l1.500 1.500M4.500 9.500 6 11l1.500-1.500M2.500 4.500 1 6l1.500 1.500M9.500 4.500 11 6 9.500 7.500" />
      </svg>
    </StatusCell>
    <StatusCell>
      <SizeGlyph dashed />
    </StatusCell>
    <StatusCell>
      <SizeGlyph />
      1920 × 1080piks.
    </StatusCell>
    <StatusCell />
    <ZoomTools>
      100%
      <RoundButton aria-label="Pomniejsz">
        <svg width="10" height="10"><path d="M1 5h8" stroke="#444" strokeWidth="2" /></svg>
      </RoundButton>
      <ZoomSlider type="range" min="0" max="100" defaultValue="50" aria-label="Powiększenie" />
      <RoundButton aria-label="Powiększ">
        <svg width="10" height="10"><path d="M1 5h8M5 1v8" stroke="#444" strokeWidth="2" /></svg>
      </RoundButton>
      <Spacer />
      <Grip />
    </ZoomTools>
  </StatusBar>
)

const Paint = () => (
  <PaintFrame>
    <PaintTitle />
    <TabRow>
      <Tab $file>Plik</Tab>
      <Tab $active>Narzędzia główne</Tab>
      <Tab>Widok</Tab>
      <TabTools>
        <LineIcon name="chevronUp" size={10} weight={2} />
        <HelpButton aria-label="Pomoc">?</HelpButton>
      </TabTools>
    </TabRow>
    <PaintRibbon />
    <Workspace>
      <CanvasArea>
        <CanvasView>
          <Wallpaper $picture>
            <Shortcuts />
            <Settings />
          </Wallpaper>
        </CanvasView>
      </CanvasArea>
      <ScrollBar $vertical>
        <button aria-label="Przewiń w górę"><LineIcon name="chevronUp" size={8} weight={3} /></button>
        <ScrollThumb $vertical $part="58%" />
        <Spacer />
        <button aria-label="Przewiń w dół"><LineIcon name="chevronDown" size={8} weight={3} /></button>
      </ScrollBar>
      <ScrollBar>
        <button aria-label="Przewiń w lewo"><LineIcon name="chevronLeft" size={14} weight={2} /></button>
        <ScrollThumb $part="76%" />
        <Spacer />
        <button aria-label="Przewiń w prawo"><LineIcon name="chevronRight" size={14} weight={2} /></button>
      </ScrollBar>
      <ScrollBar />
    </Workspace>
    <PaintStatus />
  </PaintFrame>
)

/* ---------- save dialog ---------- */

const DialogFrame = styled.section`
  position: absolute;
  left: 634px;
  top: 284px;
  display: flex;
  flex-direction: column;
  width: 946px;
  border: 1px solid #5b6066;
  background: #fff;
  box-shadow: 0 8px 24px rgba(0, 0, 0, 0.5);
`

const DialogTitle = styled.header`
  display: flex;
  align-items: center;
  gap: 5px;
  height: 30px;
  padding: 0 7px 0 8px;
  font-size: 12px;
  button {
    margin-left: auto;
  }
`

const AddressRow = styled.div`
  display: flex;
  align-items: center;
  height: 35px;
  padding: 0 12px 2px 11px;
`

const NavButtons = styled.div`
  display: flex;
  align-items: center;
  gap: 10px;
  margin-right: 5px;
  color: #d0d0d0;
  button:first-child {
    margin-right: 4px;
  }
  button:last-child {
    color: #6d6d6d;
  }
`

const AddressBox = styled.div`
  flex: 1;
  display: flex;
  align-items: center;
  gap: 5px;
  height: 22px;
  padding-left: 4px;
  border: 1px solid #d9d9d9;
  color: #6d6d6d;
  a {
    color: #000;
  }
`

const AddressEnd = styled.div`
  display: flex;
  align-items: center;
  margin-left: auto;
  button {
    display: grid;
    place-items: center;
    width: 19px;
    height: 20px;
  }
  button:last-child {
    border-left: 1px solid #d9d9d9;
  }
`

const FolderSearch = styled.label`
  display: flex;
  align-items: center;
  width: 202px;
  height: 22px;
  margin-left: 12px;
  padding: 0 7px 0 8px;
  border: 1px solid #d9d9d9;
  color: #6d6d6d;
  input {
    flex: 1;
    min-width: 0;
  }
  input::placeholder {
    color: #6d6d6d;
    opacity: 1;
  }
`

const CommandBar = styled.div`
  display: flex;
  align-items: center;
  gap: 31px;
  height: 31px;
  padding: 0 15px 0 18px;
  border-bottom: 1px solid #e5e8ec;
  background: #f5f6f8;
  color: #1e395b;
`

const CommandButton = styled.button`
  display: flex;
  align-items: center;
  gap: 7px;
  ${({ $end }) => $end && 'margin-left: auto;'}
`

const DialogBody = styled.div`
  display: flex;
  height: 318px;
`

const FolderTree = styled.nav`
  width: 159px;
  padding: 16px 2px 0 0;
  border-right: 1px solid #f0f0f0;
`

const TreeItem = styled.a`
  display: flex;
  align-items: center;
  gap: 5px;
  height: 24px;
  padding: 0 2px 0 ${({ $child }) => ($child ? '32px' : '24px')};
  margin-bottom: ${({ $apart }) => ($apart ? '8px' : '0')};
  background: ${({ $on }) => ($on ? '#d9d9d9' : 'none')};
  color: #000;
  span {
    flex: 1;
  }
`

const FilePane = styled.div`
  flex: 1;
  display: flex;
  flex-direction: column;
`

const FileTable = styled.table`
  width: 616px;
  border-collapse: collapse;
  table-layout: fixed;
  color: #6d6d6d;
  th {
    height: 25px;
    padding: 0 7px;
    border-right: 1px solid #e5e5e5;
    font-weight: 400;
    text-align: left;
    color: #4c607a;
  }
  th:first-child {
    padding-left: 18px;
  }
  td {
    height: 21px;
    padding: 0 7px;
  }
  td:last-child {
    padding-right: 8px;
    text-align: right;
  }
  tbody::before {
    content: '';
    display: block;
    height: 6px;
  }
`

const HeadName = styled.span`
  display: grid;
  grid-template-columns: 1fr 10px 1fr;
  svg {
    align-self: start;
    margin-top: -4px;
  }
`

const FileName = styled.span`
  display: flex;
  align-items: center;
  gap: 6px;
  padding-left: 14px;
  color: #000;
`

const SaveForm = styled.form`
  display: grid;
  grid-template-columns: 121px 1fr;
  row-gap: 2px;
  column-gap: 4px;
  padding: 11px 5px 0 0;
  background: #f0f0f0;
  label {
    text-align: right;
    line-height: 23px;
  }
`

const NameBox = styled.div`
  display: flex;
  align-items: center;
  height: 23px;
  padding: 0 4px 0 5px;
  border: 1px solid #0078d7;
  background: #fff;
  color: #555;
  input {
    flex: 1;
    color: #000;
  }
`

const TypeBox = styled.div`
  display: grid;
  align-items: center;
  color: #555;
  select, svg {
    grid-area: 1 / 1;
  }
  select {
    appearance: none;
    height: 23px;
    padding-left: 3px;
    border: 1px solid #adadad;
    background: #e1e1e1;
    color: #000;
  }
  svg {
    justify-self: end;
    margin-right: 5px;
    pointer-events: none;
  }
`

const FormActions = styled.div`
  grid-column: 1 / 3;
  display: flex;
  align-items: flex-start;
  gap: 14px;
  height: 56px;
  padding: 18px 0 0 12px;
`

const FoldersToggle = styled.button`
  display: flex;
  align-items: center;
  gap: 8px;
  margin: 7px auto 0 0;
`

const PushButton = styled.button`
  width: 86px;
  height: 24px;
  border: ${({ $main }) => ($main ? '2px solid #0078d7' : '1px solid #adadad')};
  background: #e1e1e1;
`

const GripSlot = styled.div`
  align-self: flex-end;
  margin: 0 -3px 0 -8px;
`

const FolderGlyph = () => (
  <svg width="13" height="16" viewBox="2 0 13 16">
    <path d="M2.500.5h10v15h-10z" fill="#ffe08a" stroke="#e8c35a" />
    <path d="M12.500 9.500h2v6h-2z" fill="#fbd267" stroke="#dcb64a" />
  </svg>
)

const treeIcons = {
  star: (
    <>
      <path d="M9.500 1.500l1.200 4.300 4.800-.3-3.800 3 1.300 4.800-3.800-2.600L5 14l1.300-4.700L3 6.500l4.300-.7z" fill="#2a8fd5" stroke="#2a8fd5" strokeWidth="0.800" />
      <path d="M2 4.500h5M0 8h5M1 11.500h4" stroke="#7cc4ee" />
    </>
  ),
  desktop: (
    <>
      <path d="M.5 2.500h15v11H.5z" fill="#1a9df4" stroke="#1277c4" />
      <path d="M6 12.500h8" stroke="#bfe3fb" />
    </>
  ),
  download: <path d="M5 .5h6v7h4.500L8 15.500.5 7.500H5z" fill="#2f86dc" />,
  document: (
    <>
      <path d="M2.500.5h8l3 3v12h-11z" fill="#fff" stroke="#8e959c" />
      <path d="M5 3.500h4M4.500 6h7M4.500 8h7" stroke="#2e8fd8" />
      <path d="M4.500 10.500h3M4.500 12.500h7" stroke="#7d8790" />
    </>
  ),
  pictures: (
    <>
      <path d="M.5 2.500h15v11H.5z" fill="#fff" stroke="#90979e" />
      <path d="M2 4h12v4H2z" fill="#9fc8ee" />
      <path d="M2 8c4-2 8 1 12 0v4H2z" fill="#3e6f78" />
    </>
  ),
  music: <path d="M7 .5h2c0 3 4.500 4 3.500 9C12 7 11 6 9 5.500v7c0 3.500-6 4-6 1 0-2 2-3 4-2.500z" fill="#1a9df4" />,
  video: (
    <>
      <path d="M1.500.5h13v15h-13z" fill="#30343a" />
      <path d="M4.500 1.500h7v6h-7z" fill="#3a66b8" />
      <path d="M4.500 8.500h7v6h-7z" fill="#2c58a6" />
      <path d="M6 6.500 8 3l3 3.500zM7 13.500l1.500-3 2 3z" fill="#e2ac2c" />
      <path d="M3 1v14M13 1v14" stroke="#d8dadd" strokeDasharray="1 1" />
    </>
  ),
  folder: (
    <>
      <path d="M2.500.5h10v15h-10z" fill="#ffe08a" stroke="#e8c35a" />
      <path d="M12.500 9.500h2v6h-2z" fill="#fbd267" stroke="#dcb64a" />
    </>
  ),
  cloud: (
    <>
      <path d="M3.500 12.500C.5 12.500-.5 8.500 2 7.500c0-3 2.500-4 4-3 2-3 6.500-2 6.500 1.500" fill="#0a64b8" />
      <path d="M6 13.500c-3 0-3-4-.5-4.500C6 5.500 10.500 5.500 11.500 8c4-.5 5.500 5.500 1.500 5.500z" fill="#0d70cc" stroke="#fff" strokeWidth="0.600" />
    </>
  ),
  computer: (
    <>
      <path d="M.5 1.500h15v10H.5z" fill="url(#screen)" stroke="#5a7f9c" />
      <path d="M5 13.500h6M0 15.500h16" stroke="#8aa3b5" />
    </>
  ),
  network: (
    <>
      <circle cx="10.500" cy="5.500" r="5" fill="#7fb2cc" />
      <path d="M7 3c2-1 5 0 7 2M8 9c2-2 3-4 2.500-8" stroke="#d4e9f2" fill="none" />
      <path d="M.5 6.500h11v7H.5z" fill="url(#screen)" stroke="#4f7b9c" />
      <path d="M3 15.500h6" stroke="#8aa3b5" />
    </>
  )
}

const tree = [
  { icon: 'star', name: 'Szybki dostęp' },
  { icon: 'desktop', name: 'Pulpit', child: true, pin: true },
  { icon: 'download', name: 'Pobrane', child: true, pin: true },
  { icon: 'document', name: 'Dokumenty', child: true, pin: true },
  { icon: 'pictures', name: 'Obrazy', child: true, pin: true },
  { icon: 'music', name: 'Muzyka', child: true },
  { icon: 'video', name: 'Wideo', child: true },
  { icon: 'folder', name: 'wyniki', child: true, apart: true },
  { icon: 'cloud', name: 'OneDrive', apart: true },
  { icon: 'computer', name: 'Ten komputer', on: true, apart: true },
  { icon: 'network', name: 'Sieć' }
]

const files = [
  { name: 'karta', date: '21.10.2026 14:35', type: 'Plik JPG', size: '172 KB' },
  { name: 'system', date: '21.10.2026 14:34', type: 'Plik JPG', size: '176 KB' }
]

const PinIcon = () => (
  <svg width="12" height="12" viewBox="0 0 12 12" fill="#8b959e">
    <path d="M7 .5 11.500 5l-1.500.3-2 2 0 2L7 10 4.500 7.500 1 11l-.5-.5L4 7 1.500 4.500 2.500 4h2l2-2z" />
  </svg>
)

const ImageFileIcon = () => (
  <svg width="12" height="16" viewBox="0 0 12 16">
    <path d="M.5.5h8l3 3v12H.5z" fill="#fff" stroke="#8a8a8a" />
    <path d="M8.500.5v3h3" fill="none" stroke="#8a8a8a" />
    <path d="M2 3h8v9H2z" fill="#1373cf" />
    <path d="M3 5h1.500L6 7l1.500-1L9 5v4L8 8 7 9.500 5.500 8 3 9z" fill="#fff" />
  </svg>
)

const SaveDialog = () => (
  <DialogFrame role="dialog" aria-label="Zapisz jako">
    <DialogTitle>
      <PaletteIcon />
      Zapisz jako
      <button aria-label="Zamknij"><LineIcon name="close" /></button>
    </DialogTitle>
    <AddressRow>
      <NavButtons>
        <button aria-label="Wstecz"><LineIcon name="back" weight={2} /></button>
        <button aria-label="Dalej"><LineIcon name="forward" weight={2} /></button>
        <button aria-label="Ostatnie"><LineIcon name="chevronDown" size={8} weight={3} /></button>
        <button aria-label="W górę"><LineIcon name="up" weight={2} /></button>
      </NavButtons>
      <AddressBox>
        <FolderGlyph />
        {['Ten komputer', 'Pulpit', 'wyniki'].map(part => (
          <React.Fragment key={part}>
            <LineIcon name="chevronRight" size={12} weight={2} />
            <a href={`#${part}`}>{part}</a>
          </React.Fragment>
        ))}
        <AddressEnd>
          <button aria-label="Poprzednie lokalizacje"><LineIcon name="chevronDown" size={10} weight={3} /></button>
          <button aria-label="Odśwież"><LineIcon name="refresh" size={14} weight={2} /></button>
        </AddressEnd>
      </AddressBox>
      <FolderSearch>
        <input type="search" placeholder="Przeszukaj: wyniki" aria-label="Przeszukaj: wyniki" />
        <LineIcon name="search" size={12} weight={2} />
      </FolderSearch>
    </AddressRow>
    <CommandBar>
      <CommandButton>Organizuj<Caret $big /></CommandButton>
      <CommandButton>Nowy folder</CommandButton>
      <CommandButton $end aria-label="Widok">
        <svg width="18" height="14" viewBox="0 0 18 14" fill="none" stroke="#8a8f96">
          <path d="M.5.500h4v12h-4zM.5 4.500h4M.5 8.500h4M6 2.500h4M12 2.500h5M6 6.500h4M12 6.500h5M6 10.500h4M12 10.500h5" />
        </svg>
        <Caret $big />
      </CommandButton>
      <HelpButton aria-label="Pomoc">?</HelpButton>
    </CommandBar>
    <DialogBody>
      <FolderTree>
        {tree.map(item => (
          <TreeItem key={item.name} href={`#${item.name}`} $child={item.child} $apart={item.apart} $on={item.on}>
            <svg width="16" height="16" viewBox="0 0 16 16">{treeIcons[item.icon]}</svg>
            <span>{item.name}</span>
            {item.pin && <PinIcon />}
          </TreeItem>
        ))}
      </FolderTree>
      <FilePane>
        <FileTable>
          <colgroup>
            <col width="272" />
            <col width="144" />
            <col width="120" />
            <col width="80" />
          </colgroup>
          <thead>
            <tr>
              <th><HeadName>Nazwa <LineIcon name="chevronUp" size={8} weight={2} /></HeadName></th>
              <th>Data modyfikacji</th>
              <th>Typ</th>
              <th>Rozmiar</th>
            </tr>
          </thead>
          <tbody>
            {files.map(file => (
              <tr key={file.name}>
                <td><FileName><ImageFileIcon />{file.name}</FileName></td>
                <td>{file.date}</td>
                <td>{file.type}</td>
                <td>{file.size}</td>
              </tr>
            ))}
          </tbody>
        </FileTable>
      </FilePane>
    </DialogBody>
    <SaveForm>
      <label htmlFor="file-name"><u>N</u>azwa pliku:</label>
      <NameBox>
        <input id="file-name" defaultValue="C:\Users\admin\Desktop\wyniki\rozdzielczosc" />
        <LineIcon name="chevronDown" size={9} weight={2} />
      </NameBox>
      <label htmlFor="file-type">Zapisz jako <u>t</u>yp:</label>
      <TypeBox>
        <select id="file-type">
          <option>JPEG (*.jpg;*.jpeg;*.jpe;*.jfif)</option>
        </select>
        <LineIcon name="chevronDown" size={9} weight={2} />
      </TypeBox>
      <FormActions>
        <FoldersToggle type="button">
          <LineIcon name="chevronUp" size={10} weight={3} />
          Ukryj foldery
        </FoldersToggle>
        <PushButton type="button" $main><u>Z</u>apisz</PushButton>
        <PushButton type="button">Anuluj</PushButton>
        <GripSlot><Grip /></GripSlot>
      </FormActions>
    </SaveForm>
  </DialogFrame>
)

/* ---------- taskbar ---------- */

const TaskbarFrame = styled.footer`
  position: absolute;
  inset: auto 0 0;
  display: flex;
  height: 40px;
  background: #04080d;
  color: #fff;
`

const TaskButton = styled.button`
  display: grid;
  place-items: center;
  width: ${({ $narrow }) => ($narrow ? '48px' : '49px')};
  border-bottom: ${({ $open }) => ($open ? '2px solid #76b9ed' : '0')};
  background: ${({ $on }) => ($on ? '#373a3f' : 'none')};
`

const TaskSearch = styled.label`
  display: flex;
  align-items: center;
  gap: 12px;
  width: 344px;
  padding-left: 12px;
  border: 1px solid #b5b5b5;
  background: #f2f2f2;
  color: #222;
  font-size: 14px;
  input {
    flex: 1;
  }
  input::placeholder {
    color: #3a3a3a;
    opacity: 1;
  }
`

const Apps = styled.div`
  display: flex;
  margin-left: 2px;
`

const Tray = styled.div`
  display: flex;
  align-items: center;
  gap: 8px;
  margin-left: auto;
`

const Clock = styled.time`
  line-height: 18px;
  text-align: center;
`

const NoticeButton = styled.button`
  position: relative;
  width: 42px;
  height: 40px;
  padding-left: 8px;
`

const NoticeCount = styled.span`
  position: absolute;
  right: 9px;
  bottom: 3px;
  width: 17px;
  height: 17px;
  border: 1px solid #777;
  border-radius: 50%;
  background: #333;
  line-height: 15px;
  font-weight: 600;
`

const ShowDesktop = styled.button`
  width: 5px;
  height: 40px;
  margin-left: 2px;
  border-left: 1px solid #6c7075;
`

const Taskbar = () => (
  <TaskbarFrame>
    <TaskButton $narrow aria-label="Start">
      <svg width="16" height="16" viewBox="0 0 16 16" fill="#fff">
        <path d="M0 2.300 6.500 1.400v6.100H0zM7.300 1.300 16 0v7.500H7.300zM0 8.300h6.500v6.200L0 13.600zM7.300 8.300H16V16l-8.700-1.300z" />
      </svg>
    </TaskButton>
    <TaskSearch>
      <LineIcon name="search" />
      <input type="search" placeholder="Wpisz tutaj, aby wyszukać" aria-label="Wpisz tutaj, aby wyszukać" />
    </TaskSearch>
    <TaskButton $narrow aria-label="Widok zadań"><LineIcon name="multi" /></TaskButton>
    <Apps>
      <TaskButton aria-label="Copilot">
        <svg width="24" height="24" viewBox="0 0 24 24">
          <path d="M8 2h6c2 0 2.500 1.500 3 3l.5 2H14c-2 0-2.500 1-3 3l-2 7H4c-3 0-3-3-2.500-5L4 5c.7-2 2-3 4-3z" fill="url(#copilotA)" />
          <path d="M16 22h-6c-2 0-2.500-1.500-3-3l-.5-2H10c2 0 2.500-1 3-3l2-7h5c3 0 3 3 2.500 5L20 19c-.7 2-2 3-4 3z" fill="url(#copilotB)" />
        </svg>
      </TaskButton>
      <TaskButton aria-label="Microsoft Edge"><EdgeIcon size={24} /></TaskButton>
      <TaskButton aria-label="Eksplorator plików">
        <svg width="22" height="20" viewBox="0 0 22 20">
          <path d="M0 1h8l2 2h12v16H0z" fill="#f0b428" />
          <path d="M0 5h22v14H0z" fill="#ffdc7a" />
          <path d="M4 12c0-1 1-2 2-2h10c1 0 2 1 2 2v7h-4v-4H8v4H4z" fill="#3b98dc" />
        </svg>
      </TaskButton>
      <TaskButton aria-label="Microsoft Store">
        <svg width="24" height="24" viewBox="0 0 24 24">
          <path d="M8 7V4c0-4 8-4 8 0v3" fill="none" stroke="#fff" strokeWidth="1.500" />
          <path d="M1 6h22v15c0 1-1 2-2 2H3c-1 0-2-1-2-2z" fill="#fff" />
          <path d="M7 9h5v5H7z" fill="#f25022" />
          <path d="M12.500 9h5v5h-5z" fill="#7fba00" />
          <path d="M7 14.500h5v5H7z" fill="#00a4ef" />
          <path d="M12.500 14.500h5v5h-5z" fill="#ffb900" />
        </svg>
      </TaskButton>
      <TaskButton aria-label="Poczta">
        <svg width="24" height="18" viewBox="0 0 24 18">
          <path d="M0 5 12 0l12 5v13H0z" fill="#fff" />
          <path d="M1 5.500h20L10 10.500l6 4.500L1 6z" fill="#04080d" />
        </svg>
      </TaskButton>
      <TaskButton $open aria-label="Ustawienia">
        <svg width="20" height="20" viewBox="0 0 20 20" fill="none" stroke="#fff">
          <circle cx="10" cy="10" r="5.200" strokeWidth="2.500" />
          <circle cx="10" cy="10" r="7.500" strokeWidth="3" strokeDasharray="2.900 2.990" />
        </svg>
      </TaskButton>
      <TaskButton $open $on aria-label="Paint"><PaletteIcon size={24} /></TaskButton>
    </Apps>
    <Tray>
      <LineIcon name="chevronUp" size={14} weight={2} />
      <svg width="16" height="16" viewBox="0 0 16 16" fill="none" stroke="#fff">
        <path d="M3 5.500h7v6H3zM10 7.500l3-2v6l-3-2M4 2c2-1.500 6-1.500 8 0M4 14.500c2 1.500 6 1.500 8 0" />
      </svg>
      <svg width="16" height="16" viewBox="0 0 16 16" fill="none" stroke="#fff">
        <path d="M5.500 5.500h9v6h-9zM15.500 7v3M1.500 2v3M4.500 2v3M.5 4.500h5v2c-1 1.500-4 1.500-5 0zM3 8v3.500h3" />
        <path d="M7 7h6v3H7z" fill="#fff" />
      </svg>
      <svg width="16" height="16" viewBox="0 0 16 16" fill="none" stroke="#fff">
        <circle cx="8" cy="8" r="7" />
        <ellipse cx="8" cy="8" rx="3" ry="7" />
        <path d="M1.500 5.500h13M1.500 10.500h13" />
        <circle cx="12.500" cy="12" r="3" fill="#04080d" />
        <path d="M10.500 10l4 4" />
      </svg>
      <svg width="16" height="16" viewBox="0 0 16 16" fill="none" stroke="#fff">
        <path d="M.5 5.500h2l3-3v11l-3-3h-2z" />
        <circle cx="11.500" cy="11.500" r="4.500" fill="#dc2430" stroke="none" />
        <path d="M9.500 9.500l4 4M13.500 9.500l-4 4" strokeWidth="1.300" />
      </svg>
      <Clock>14:36<br />21.10.2026</Clock>
      <NoticeButton aria-label="Powiadomienia">
        <svg width="16" height="16" viewBox="0 0 16 16">
          <path d="M0 0h16v12H7l-4 4v-4H0z" fill="#fff" />
          <path d="M3 3.500h10M3 6h10M3 8.500h7" stroke="#04080d" />
        </svg>
        <NoticeCount>2</NoticeCount>
      </NoticeButton>
    </Tray>
    <ShowDesktop aria-label="Pokaż pulpit" />
  </TaskbarFrame>
)

const App = () => (
  <>
    <GlobalStyle />
    <Gradients />
    <Wallpaper as="main">
      <Shortcuts />
      <Branding>
        <BrandTitle>zawodowe.edu.pl</BrandTitle>
        <BrandAuthor>Autor: Bartosz Bryniarski</BrandAuthor>
      </Branding>
      <BrandBadge>zawodowe.edu.pl</BrandBadge>
      <Settings />
      <Paint />
      <SaveDialog />
      <Taskbar />
    </Wallpaper>
  </>
)

export default App
